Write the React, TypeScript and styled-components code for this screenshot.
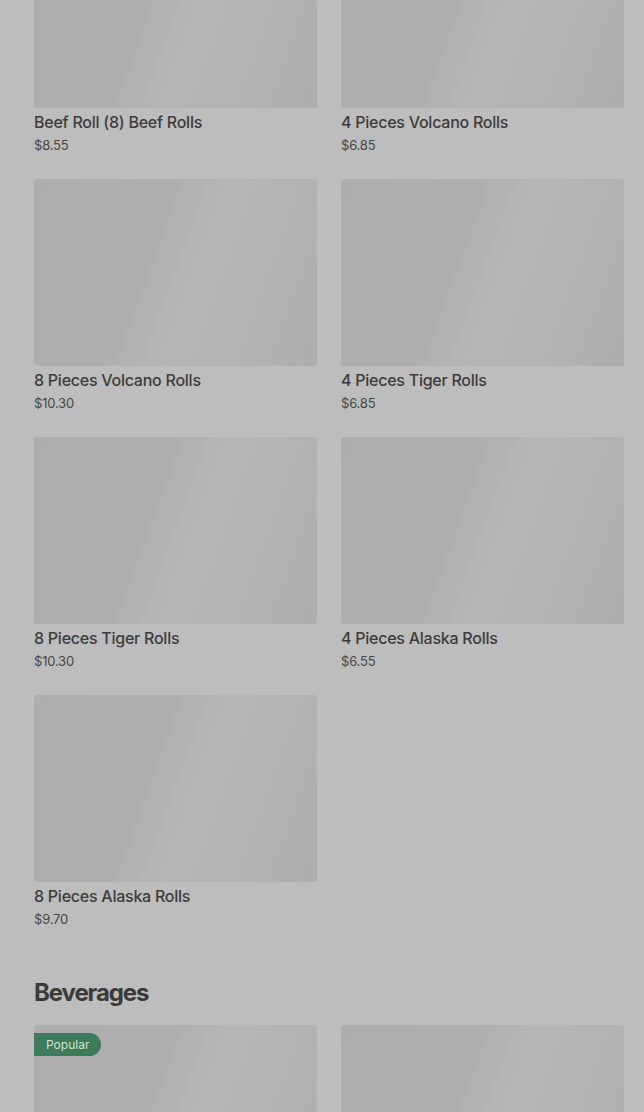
import { createGlobalStyle, styled } from "styled-components";

const GlobalStyle = createGlobalStyle`
  html, body {
    margin: 0;
    padding: 0;
    background: #bdbdbd;
    font-family: Inter, "Noto Sans", Arial, sans-serif;
    overflow: hidden;
  }
`;

type Item = { name: string; price: string; popular?: boolean };

const rolls: Item[] = [
  { name: "Beef Roll (8) Beef Rolls", price: "$8.55" },
  { name: "4 Pieces Volcano Rolls", price: "$6.85" },
  { name: "8 Pieces Volcano Rolls", price: "$10.30" },
  { name: "4 Pieces Tiger Rolls", price: "$6.85" },
  { name: "8 Pieces Tiger Rolls", price: "$10.30" },
  { name: "4 Pieces Alaska Rolls", price: "$6.55" },
  { name: "8 Pieces Alaska Rolls", price: "$9.70" },
];

// only the tops of these show, the rest sits below the fold
const beverages: Item[] = [{ name: "", price: "", popular: true }, { name: "", price: "" }];

function ItemCard({ item }: { item: Item }) {
  return (
    <Card>
      <Thumb>{item.popular && <Badge>Popular</Badge>}</Thumb>
      {item.name && <ItemName>{item.name}</ItemName>}
      {item.price && <ItemPrice>{item.price}</ItemPrice>}
    </Card>
  );
}

function App() {
  return (
    <>
      <GlobalStyle />
      <Page>
        <Grid>
          {rolls.map((item, id) => (
            <ItemCard key={`roll_${id}`} item={item} />
          ))}
        </Grid>
        <SectionTitle>Beverages</SectionTitle>
        <Grid>
          {beverages.map((item, id) => (
            <ItemCard key={`bev_${id}`} item={item} />
          ))}
        </Grid>
      </Page>
    </>
  );
}

export default App;

const Page = styled.main`
  margin-top: -79px;
  padding: 0 20px 0 34px;
`;

const Grid = styled.div`
  display: grid;
  grid-template-columns: 283px 283px;
  column-gap: 24px;
  row-gap: 24px;
`;

const Card = styled.div`
  display: flex;
  flex-direction: column;
`;

const Thumb = styled.div`
  position: relative;
  height: 187px;
  border-radius: 3px;
  background: linear-gradient(
    110deg,
    #aeaeae 0%,
    #afafaf 40%,
    #b5b5b5 55%,
    #b3b3b3 75%,
    #adadad 100%
  );
`;

const Badge = styled.span`
  position: absolute;
  top: 8px;
  left: 0;
  height: 23px;
  padding: 0 12px;
  display: flex;
  align-items: center;
  border-radius: 0 12px 12px 0;
  background: #3d7b5a;
  color: #d3e4da;
  font-size: 12px;
`;

const ItemName = styled.div`
  margin-top: 4px;
  line-height: 20px;
  font-size: 16px;
  font-weight: 500;
  letter-spacing: -0.25px;
  color: #3c3c3c;
`;

const ItemPrice = styled.div`
  margin-top: 3px;
  line-height: 20px;
  font-size: 13px;
  letter-spacing: -0.2px;
  color: #474747;
`;

const SectionTitle = styled.h2`
  margin: 48px 0 16px;
  line-height: 32px;
  font-size: 24px;
  font-weight: 700;
  letter-spacing: -1.1px;
  color: #3a3a3a;
`;
